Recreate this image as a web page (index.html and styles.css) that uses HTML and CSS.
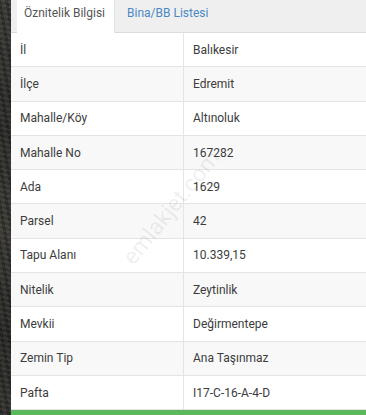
FILE: index.html
```html
<!DOCTYPE html>
<html lang="tr">
<head>
<meta charset="utf-8">
<link rel="stylesheet" href="styles.css">
</head>
<body>
<div class="page">
  <div class="strip"></div>
  <div class="main">
    <div class="tabs">
      <div class="tab active">Öznitelik Bilgisi</div>
      <div class="tab link">Bina/BB Listesi</div>
    </div>
    <div class="table">
      <div class="row"><div class="k">İl</div><div class="v">Balıkesir</div></div>
      <div class="row"><div class="k">İlçe</div><div class="v">Edremit</div></div>
      <div class="row"><div class="k">Mahalle/Köy</div><div class="v">Altınoluk</div></div>
      <div class="row"><div class="k">Mahalle No</div><div class="v">167282</div></div>
      <div class="row"><div class="k">Ada</div><div class="v">1629</div></div>
      <div class="row"><div class="k">Parsel</div><div class="v">42</div></div>
      <div class="row"><div class="k">Tapu Alanı</div><div class="v">10.339,15</div></div>
      <div class="row"><div class="k">Nitelik</div><div class="v">Zeytinlik</div></div>
      <div class="row"><div class="k">Mevkii</div><div class="v">Değirmentepe</div></div>
      <div class="row"><div class="k">Zemin Tip</div><div class="v">Ana Taşınmaz</div></div>
      <div class="row"><div class="k">Pafta</div><div class="v">I17-C-16-A-4-D</div></div>
    </div>
    <div class="green"></div>
    <div class="watermark">emlakjet.com</div>
  </div>
</div>
</body>
</html>
```
FILE: styles.css
```css
html, body {
  margin: 0;
  padding: 0;
  height: 100%;
  overflow: hidden;
}
body {
  font-family: Roboto, "Noto Sans", Arial, sans-serif;
  font-size: 12px;
  color: #3c3c3c;
  background: #fff;
}
.page {
  display: flex;
  height: 415px;
}
.strip {
  width: 11px;
  flex: none;
  background:
    repeating-linear-gradient(12deg, rgba(255,255,255,0.06) 0 2px, rgba(0,0,0,0) 2px 5px),
    repeating-linear-gradient(80deg, rgba(0,0,0,0.25) 0 3px, rgba(0,0,0,0) 3px 7px),
    linear-gradient(180deg, #3a3b36 0%, #2c2d2a 30%, #3b3a35 55%, #2a2a28 80%, #34332f 100%);
}
.main {
  flex: 1;
  position: relative;
  display: flex;
  flex-direction: column;
  overflow: hidden;
}
.tabs {
  display: flex;
  height: 32px;
  background: #efefef;
  border-bottom: 1px solid #dcdcdc;
  padding-left: 6px;
}
.tab {
  box-sizing: border-box;
  height: 33px;
  padding: 6px 0 0 7px;
  line-height: 14px;
  white-space: nowrap;
}
.tab.active {
  background: #fff;
  color: #555;
  border-right: 1px solid #e2e2e2;
  width: 98px;
}
.tab.link {
  color: #4a8ac4;
  padding-left: 12px;
}
.table {
  display: flex;
  flex-direction: column;
}
.row {
  display: grid;
  grid-template-columns: 173px 1fr;
  height: 34.3px;
  box-sizing: border-box;
  border-bottom: 1px solid #e4e4e4;
  align-items: center;
}
.row:nth-child(even) {
  background: #f8f8f8;
}
.k {
  padding-left: 9px;
  height: 100%;
  display: flex;
  align-items: center;
  border-right: 1px solid #e4e4e4;
}
.v {
  padding-left: 9px;
}
.green {
  height: 6px;
  background: #5cb85c;
}
.watermark {
  position: absolute;
  left: 91px;
  top: 194px;
  font-size: 23px;
  line-height: 27px;
  color: rgba(0,0,0,0.08);
  transform: rotate(-51deg);
  transform-origin: center;
  white-space: nowrap;
}
```
